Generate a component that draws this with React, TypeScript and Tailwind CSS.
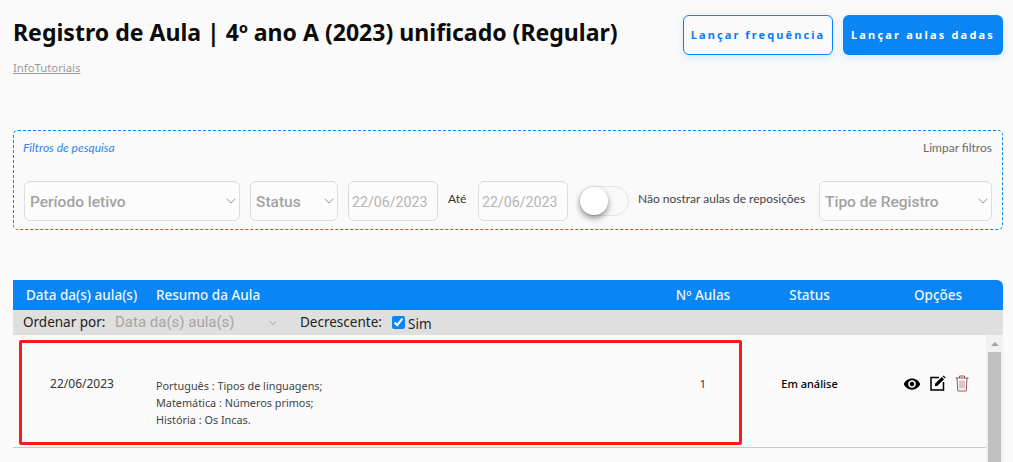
import { ChevronDown } from "lucide-react";

function FilterSelect({ label, className }: { label: string; className: string }) {
  return (
    <div className={`flex h-10 items-center justify-between rounded-md border border-[#dcdcdc] bg-[#fcfcfc] pl-[5px] font-['Roboto',sans-serif] text-[15.5px] font-medium text-[#a3a3a3] ${className}`}>
      <span className="pt-1">{label}</span>
      <ChevronDown size={16} strokeWidth={1.3} className="text-[#8a8a8a]" />
    </div>
  );
}

function DateBox({ className }: { className?: string }) {
  return (
    <div className={`flex h-10 w-[90px] items-center rounded-md border border-[#dcdcdc] bg-[#fcfcfc] pt-1 pl-[3px] font-['Roboto',sans-serif] text-[14.2px] text-[#b5b5b5] ${className ?? ""}`}>
      22/06/2023
    </div>
  );
}

function EyeIcon() {
  return (
    <svg width="18" height="18" viewBox="0 0 24 24" fill="#000">
      <path d="M12 4.500C7 4.500 2.700 7.600 1 12c1.700 4.400 6 7.500 11 7.500s9.300-3.100 11-7.500c-1.700-4.400-6-7.500-11-7.500zM12 17a5 5 0 1 1 0-10 5 5 0 0 1 0 10zm0-8a3 3 0 1 0 0 6 3 3 0 0 0 0-6z" />
    </svg>
  );
}

function EditIcon() {
  return (
    <svg width="16" height="16" viewBox="0 0 16 16" fill="none">
      <path d="M9 2.500H1v12.500h12.500V7" stroke="#000" strokeWidth="1.500" />
      <path d="M5 8.800 11.800 2l2.200 2.200L7.200 11H5z" fill="#000" />
      <path d="M12.600 1.200 13.400.4l2.200 2.200-.8.800z" fill="#000" />
    </svg>
  );
}

function TrashIcon() {
  return (
    <svg width="14" height="17" viewBox="0 0 14 17" fill="none" stroke="#8f5a58" strokeWidth="1">
      <path d="M.5 3h13M4.500 3V1h5v2" />
      <path d="M2 3l.8 13h8.400L12 3" />
      <path d="M5 5.500v8M7 5.500v8M9 5.500v8" stroke="#c98d8a" />
    </svg>
  );
}

export default function App() {
  return (
    <div className="h-[462px] w-[1013px] overflow-hidden bg-[#fafafa] pl-[13px] pr-[10px] font-['Noto_Sans',sans-serif]">
      {/* Header */}
      <div className="flex h-[130px] items-start justify-between pt-[15px]">
        <div>
          <h1 className="text-[23.05px] leading-[34px] font-bold text-[#0b0b0b]">
            Registro de Aula | 4º ano A (2023) unificado (Regular)
          </h1>
          <a className="mt-[11px] block text-[11.3px] leading-4 text-[#9a9a9a] underline">InfoTutoriais</a>
        </div>
        <div className="flex gap-[10px]">
          <button className="h-10 w-[150px] rounded-md border border-[#0a85f5] bg-[#fafafa] text-[11px] font-bold tracking-[2.100px] text-[#0a7cf0] shadow-[0_3px_8px_rgba(10,133,245,0.15)]">
            Lançar frequência
          </button>
          <button className="h-10 w-[160px] rounded-md bg-[#0a85f5] text-[11px] font-bold tracking-[2.200px] text-white shadow-[0_3px_8px_rgba(10,133,245,0.15)]">
            Lançar aulas dadas
          </button>
        </div>
      </div>

      {/* Filtros */}
      <div className="h-[100px] rounded-[5px] border border-dashed border-[#0a85f5] px-[10px] font-['Lato',sans-serif]">
        <div className="-ml-px flex items-center justify-between pt-[10px] text-xs leading-[14px]">
          <span className="text-[#2e86f0] italic">Filtros de pesquisa</span>
          <span className="text-[#6b6b6b]">Limpar filtros</span>
        </div>
        <div className="mt-[26px] flex items-center">
          <FilterSelect label="Período letivo" className="w-[216px]" />
          <FilterSelect label="Status" className="ml-[10px] w-[88px]" />
          <DateBox className="ml-[10px]" />
          <span className="mb-1 ml-[10px] w-[30px] text-xs text-[#333]">Até</span>
          <DateBox />
          <div className="relative ml-[11px] h-[30px] w-[50px] rounded-full border border-[#e4e4e4] bg-[#fafafa]">
            <div className="absolute top-0 left-0 h-7 w-7 rounded-full bg-white shadow-[0_3px_6px_rgba(0,0,0,0.45)]" />
          </div>
          <span className="mb-1 ml-[9px] w-[181px] text-xs text-[#444]">Não nostrar aulas de reposições</span>
          <FilterSelect label="Tipo de Registro" className="w-[173px]" />
        </div>
      </div>

      {/* Tabela */}
      <div className="mt-[50px]">
        <div className="grid h-[30px] grid-cols-[143px_507px_80px_133px_127px] items-center rounded-tr-md bg-[#0a85f5] text-[13.5px] font-medium text-[#eef6ff]">
          <span className="pl-[13px]">Data da(s) aula(s)</span>
          <span>Resumo da Aula</span>
          <span className="text-center">Nº Aulas</span>
          <span className="text-center">Status</span>
          <span className="pr-[3px] text-center">Opções</span>
        </div>
        <div className="flex h-[25px] items-center bg-[#dfdfdf] pl-[10px] text-[13.5px] text-[#222]">
          <span className="w-[92px]">Ordenar por:</span>
          <span className="flex w-[185px] items-center font-['Roboto',sans-serif] text-[15px] text-[#a6a6a6]">
            <span className="w-[152px]">Data da(s) aula(s)</span>
            <ChevronDown size={12} strokeWidth={1.5} className="text-[#8a8a8a]" />
          </span>
          <span className="w-[92px]">Decrescente:</span>
          <input type="checkbox" checked readOnly className="h-[13px] w-[13px] accent-[#0a85f5]" />
          <span className="mt-1 ml-[3px]">Sim</span>
        </div>
        <div className="relative flex h-[127px]">
          <div className="w-[973px]">
            <div className="grid h-[113px] grid-cols-[138px_512px_80px_133px_110px] border-b border-[#c9c9c9] text-[11px]">
              <span className="pt-[41px] text-center text-xs text-[#333]">22/06/2023</span>
              <div className="pt-[42px] pl-[5px] text-[10.85px] leading-[17px] text-[#444]">
                <p>Português : Tipos de linguagens;</p>
                <p>Matemática : Números primos;</p>
                <p>História : Os Incas.</p>
              </div>
              <span className="pt-[41px] text-center text-[#333]">1</span>
              <span className="pt-[41px] text-center font-medium text-[#000]">Em análise</span>
              <div className="flex items-start gap-[9px] pt-10 pl-[27px]">
                <EyeIcon />
                <EditIcon />
                <TrashIcon />
              </div>
            </div>
          </div>
          <div className="flex w-[17px] flex-col items-center bg-[#f1f1f1]">
            <div className="mt-[7px] h-0 w-0 border-x-[4px] border-b-[4px] border-x-transparent border-b-[#a3a3a3]" />
            <div className="mt-[6px] w-[13px] flex-1 bg-[#c1c1c1]" />
          </div>
          {/* destaque vermelho */}
          <div className="absolute top-[5px] left-[6px] h-[105px] w-[723px] rounded-[2px] border-[3px] border-[#fb1a1a]" />
        </div>
      </div>
    </div>
  );
}
